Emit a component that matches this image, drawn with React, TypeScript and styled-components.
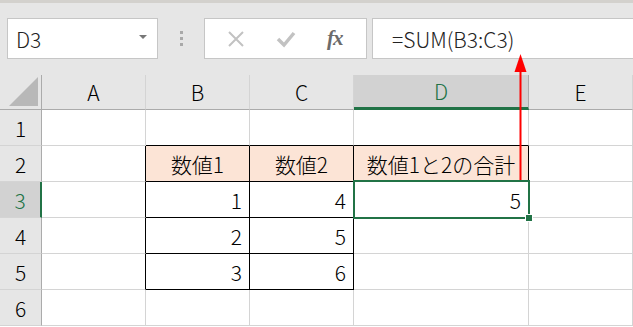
import { FC, Fragment } from "react";
import styled, { createGlobalStyle } from "styled-components";

const GlobalStyle = createGlobalStyle`
  html, body {
    margin: 0;
    padding: 0;
    background: #ffffff;
    overflow: hidden;
  }
  * { box-sizing: border-box; }
`;

const GREEN = "#217346";
const GRID = "#d4d4d4";
const FONT = `"Noto Sans CJK JP", "Noto Sans", sans-serif`;

const Page = styled.div`
  position: relative;
  width: 633px;
  height: 327px;
  font-family: ${FONT};
  font-weight: 300;
  overflow: hidden;
`;

const Toolbar = styled.div`
  height: 75px;
  background: #e6e6e6;
  border-top: 3px solid #d3d1cd;
  padding: 15px 0 0 7px;
  display: flex;
  align-items: flex-start;
`;

const NameBox = styled.div`
  width: 151px;
  height: 41px;
  background: #fff;
  border: 1px solid #c6c6c6;
  display: flex;
  align-items: center;
  justify-content: space-between;
  padding: 0 10px 0 8px;
  font-size: 21px;
  color: #222;
`;

const DropArrow = styled.span`
  width: 0;
  height: 0;
  border-left: 4px solid transparent;
  border-right: 4px solid transparent;
  border-top: 4px solid #777;
  margin-bottom: 4px;
`;

const Grip = styled.div`
  width: 46px;
  height: 41px;
  display: flex;
  flex-direction: column;
  align-items: center;
  justify-content: center;
  gap: 3px;

  span {
    width: 3px;
    height: 3px;
    background: #a9a9a9;
  }
`;

const Buttons = styled.div`
  width: 163px;
  height: 41px;
  background: #fff;
  border: 1px solid #c6c6c6;
  display: flex;
  align-items: center;
  justify-content: space-around;
  padding: 0 8px 0 6px;
`;

const Fx = styled.span`
  font-family: "Liberation Serif", serif;
  font-style: italic;
  font-weight: bold;
  font-size: 21px;
  color: #6b6b6b;
  letter-spacing: -1px;
`;

const FormulaInput = styled.div`
  flex: 1;
  height: 41px;
  margin-left: 5px;
  background: #fff;
  border: 1px solid #c6c6c6;
  border-right: none;
  display: flex;
  align-items: center;
  padding-left: 19px;
  font-size: 21px;
  color: #222;
`;

const Sheet = styled.div`
  display: grid;
  grid-template-columns: 42px 104px 104px 104px 175px 1fr;
  grid-template-rows: 35px repeat(6, 36px);
`;

const Corner = styled.div`
  background: #e6e6e6;
  border-right: 1px solid #ababab;
  border-bottom: 1px solid #ababab;
  display: flex;
  align-items: flex-end;
  justify-content: flex-end;
  padding: 0 3px 3px 0;
`;

const ColHead = styled.div<{ $active?: boolean }>`
  background: ${({ $active }) => ($active ? "#d2d2d2" : "#e6e6e6")};
  color: ${({ $active }) => ($active ? GREEN : "#000")};
  border-right: 1px solid ${({ $active }) => ($active ? "#ababab" : GRID)};
  border-bottom: ${({ $active }) => ($active ? `3px solid ${GREEN}` : "1px solid #ababab")};
  display: flex;
  align-items: center;
  justify-content: center;
  font-size: 21px;
`;

const RowHead = styled.div<{ $active?: boolean }>`
  background: ${({ $active }) => ($active ? "#d2d2d2" : "#e6e6e6")};
  color: ${({ $active }) => ($active ? GREEN : "#000")};
  border-right: ${({ $active }) => ($active ? `2px solid ${GREEN}` : "1px solid #ababab")};
  border-bottom: 1px solid ${GRID};
  display: flex;
  align-items: center;
  justify-content: center;
  font-size: 21px;
`;

const Cell = styled.div<{ $fill?: string; $right?: string; $bottom?: string; $align?: string; $selected?: boolean }>`
  position: relative;
  z-index: ${({ $selected }) => ($selected ? 2 : "auto")};
  background: ${({ $fill }) => $fill || "#fff"};
  border-right: 1px solid ${({ $right }) => $right || GRID};
  border-bottom: 1px solid ${({ $bottom }) => $bottom || GRID};
  display: flex;
  align-items: center;
  justify-content: ${({ $align }) => ($align === "right" ? "flex-end" : "center")};
  padding: 0 7px;
  font-size: 21px;
  color: #000;
  white-space: nowrap;
`;

const Selection = styled.div`
  position: absolute;
  top: -2px;
  left: -1px;
  right: -2px;
  bottom: -2px;
  border: 2px solid ${GREEN};
  pointer-events: none;
`;

const Handle = styled.div`
  position: absolute;
  right: -5px;
  bottom: -5px;
  width: 8px;
  height: 8px;
  background: ${GREEN};
  border: 1px solid #fff;
`;

const Arrow = styled.svg`
  position: absolute;
  left: 0;
  top: 0;
  z-index: 3;
  pointer-events: none;
`;

type CellData = { text?: string; fill?: string; right?: string; bottom?: string; align?: string; selected?: boolean };

const PEACH = "#fce4d6";
const BLACK = "#000";
const cols = ["A", "B", "C", "D", "E"];

const rows: CellData[][] = [
  [{}, { bottom: BLACK }, { bottom: BLACK }, { bottom: BLACK }, {}],
  [
    { right: BLACK },
    { text: "数値1", fill: PEACH, right: BLACK, bottom: BLACK },
    { text: "数値2", fill: PEACH, right: BLACK, bottom: BLACK },
    { text: "数値1と2の合計", fill: PEACH, right: BLACK, bottom: BLACK },
    {},
  ],
  [
    { right: BLACK },
    { text: "1", align: "right", right: BLACK, bottom: BLACK },
    { text: "4", align: "right", right: BLACK, bottom: BLACK },
    { text: "5", align: "right", selected: true },
    {},
  ],
  [
    { right: BLACK },
    { text: "2", align: "right", right: BLACK, bottom: BLACK },
    { text: "5", align: "right", right: BLACK, bottom: BLACK },
    {},
    {},
  ],
  [
    { right: BLACK },
    { text: "3", align: "right", right: BLACK, bottom: BLACK },
    { text: "6", align: "right", right: BLACK, bottom: BLACK },
    {},
    {},
  ],
  [{}, {}, {}, {}, {}],
];

const App: FC = () => {
  return (
    <>
      <GlobalStyle />
      <Page>
        <Toolbar>
          <NameBox>
            D3
            <DropArrow />
          </NameBox>
          <Grip>
            <span />
            <span />
            <span />
          </Grip>
          <Buttons>
            <svg width="18" height="18" viewBox="0 0 18 18">
              <path d="M2 2 L16 16 M16 2 L2 16" stroke="#c2c2c2" strokeWidth="2" fill="none" />
            </svg>
            <svg width="20" height="18" viewBox="0 0 20 18">
              <path d="M2 9 L8 15 L18 3" stroke="#c2c2c2" strokeWidth="3.5" fill="none" />
            </svg>
            <Fx>fx</Fx>
          </Buttons>
          <FormulaInput>=SUM(B3:C3)</FormulaInput>
        </Toolbar>

        <Sheet>
          <Corner>
            <svg width="29" height="29" viewBox="0 0 29 29">
              <polygon points="29,0 29,29 0,29" fill="#b8b8b8" />
            </svg>
          </Corner>
          {cols.map((c) => (
            <ColHead key={c} $active={c === "D"}>
              {c}
            </ColHead>
          ))}
          {rows.map((row, ri) => (
            <Fragment key={ri}>
              <RowHead $active={ri === 2}>{ri + 1}</RowHead>
              {row.map((cell, ci) => (
                <Cell
                  key={ci}
                  $fill={cell.fill}
                  $right={cell.right}
                  $bottom={cell.bottom}
                  $align={cell.align}
                  $selected={cell.selected}
                >
                  {cell.text}
                  {cell.selected && (
                    <Selection>
                      <Handle />
                    </Selection>
                  )}
                </Cell>
              ))}
            </Fragment>
          ))}
        </Sheet>

        <Arrow width="633" height="327">
          <line x1="520.5" y1="70" x2="520.5" y2="180" stroke="#ff0000" strokeWidth="2" />
          <polygon points="514.5,72 520.5,54 526.5,72" fill="#ff0000" />
        </Arrow>
      </Page>
    </>
  );
};

export default App;
